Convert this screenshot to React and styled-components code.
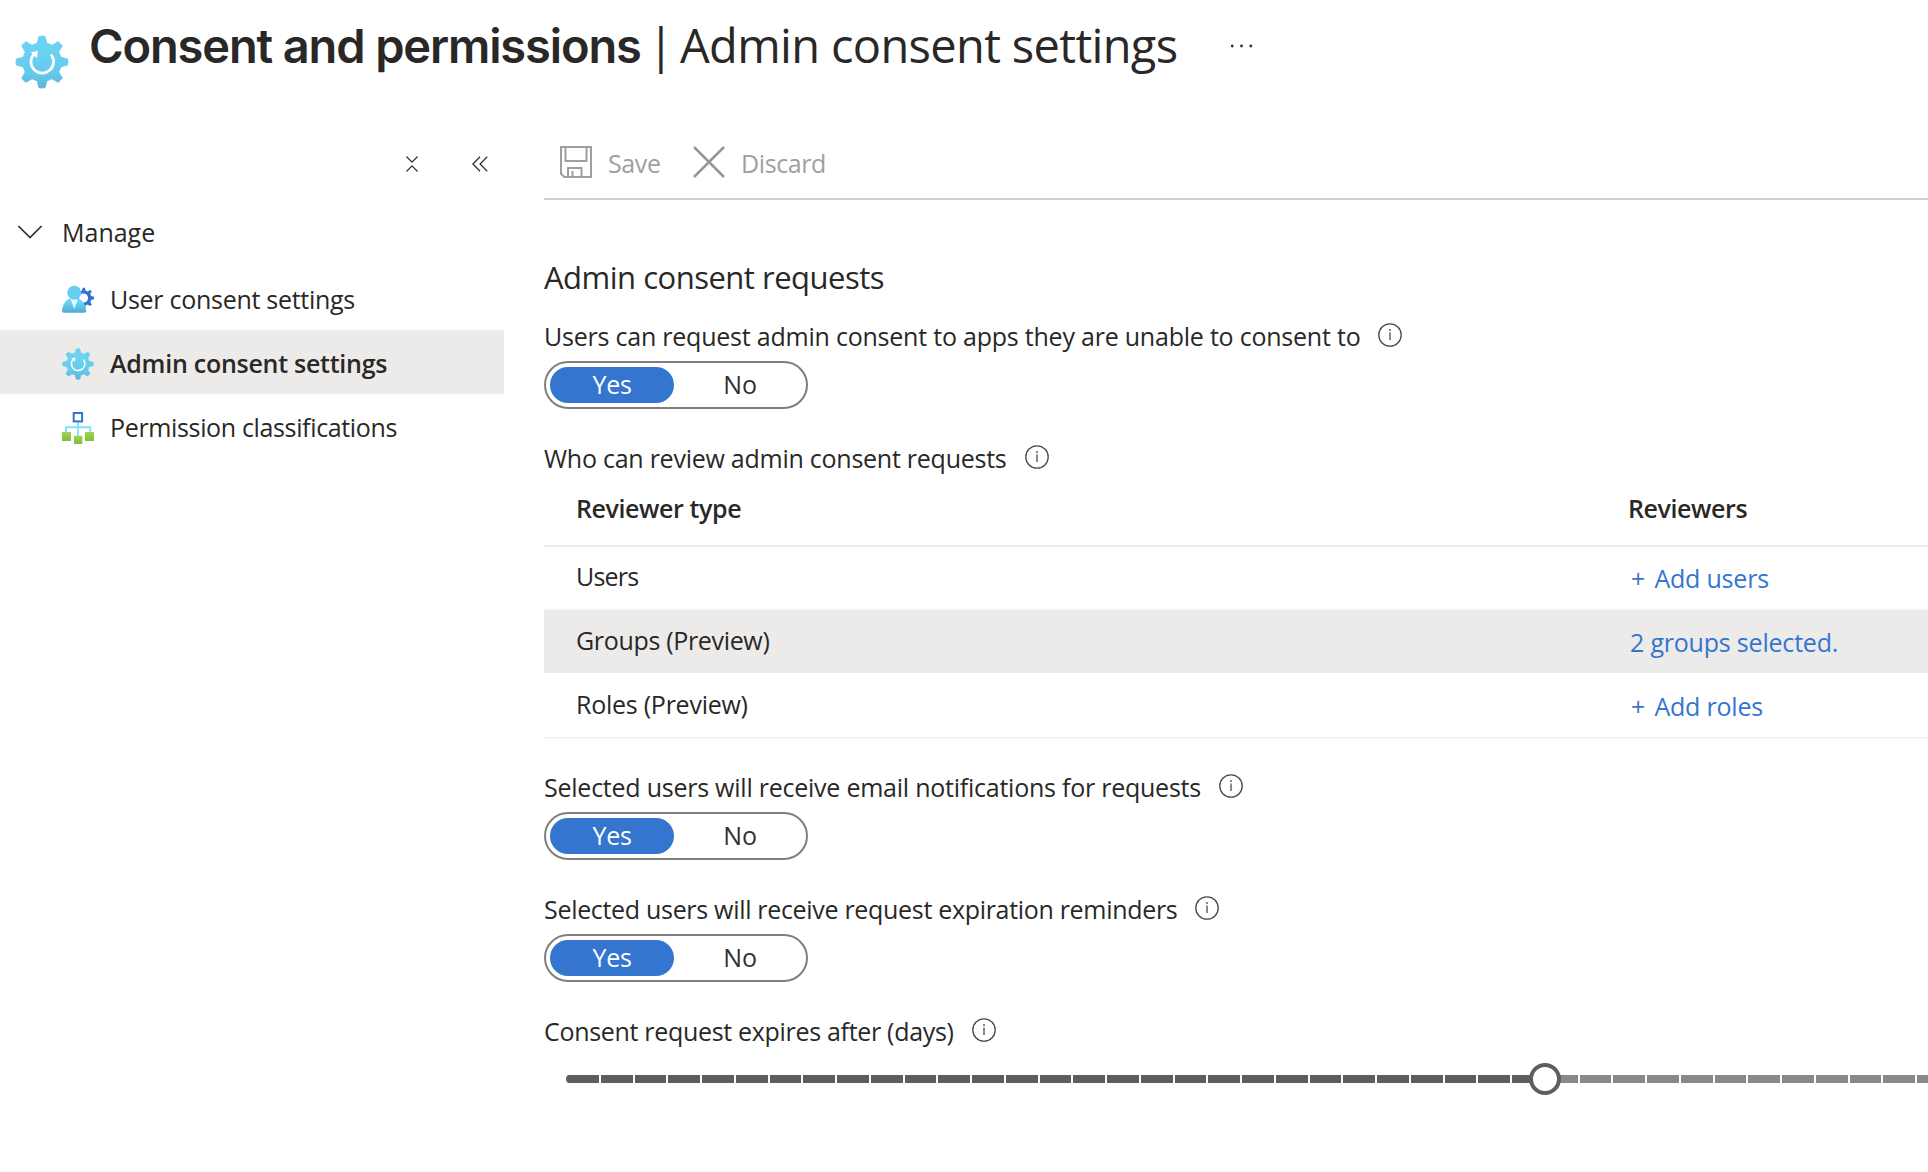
import React, { useState } from 'react';
import styled, { createGlobalStyle } from 'styled-components';

const GlobalStyle = createGlobalStyle`
  * {
    box-sizing: border-box;
  }
  body {
    margin: 0;
    background: #ffffff;
    color: #292827;
    font-family: "Open Sans", "Noto Sans", sans-serif;
    font-size: 25px;
    overflow: hidden;
  }
`;

const Page = styled.div`
  width: 100%;
  height: 1172px;
  overflow: hidden;
`;

const Header = styled.header`
  display: flex;
  align-items: flex-start;
  height: 130px;
  padding-left: 15px;
`;

const HeaderIcon = styled.div`
  width: 54px;
  height: 54px;
  margin-top: 35px;

  & svg {
    display: block;
  }
`;

const Title = styled.h1`
  display: flex;
  align-items: baseline;
  margin: 0 0 0 20px;
  height: 90px;
  line-height: 90px;
  font-size: 47px;
  font-weight: 400;
  white-space: nowrap;
`;

const TitleName = styled.span`
  width: 559px;
  font-family: Inter, sans-serif;
  font-weight: 600;
  letter-spacing: -1.13px;
`;

const TitleBar = styled.span`
  width: 32px;
  font-weight: 500;
`;

const TitleSection = styled.span`
  width: 550px;
  letter-spacing: -0.66px;
`;

const MoreIcon = styled.svg`
  margin-top: 42px;
`;

const Body = styled.div`
  display: flex;
`;

const Sidebar = styled.nav`
  flex: none;
  width: 504px;
  margin-right: 40px;
`;

const SidebarTools = styled.div`
  display: flex;
  align-items: center;
  justify-content: flex-end;
  gap: 54px;
  height: 68px;
  padding-right: 16px;
`;

const GroupHeader = styled.div`
  display: flex;
  align-items: center;
  height: 68px;
  padding-left: 17px;

  & svg {
    margin-right: 19px;
  }
`;

const NavItem = styled.a`
  display: flex;
  align-items: center;
  height: 64px;
  padding: 2px 0 0 62px;
  background: ${({ $active }) => ($active ? '#edebe9' : 'transparent')};
  font-weight: ${({ $active }) => ($active ? 600 : 400)};
  letter-spacing: ${({ $track }) => $track}px;
  white-space: nowrap;
  cursor: pointer;

  & svg {
    flex: none;
    margin: 2px 16px 0 0;
  }
`;

const Main = styled.main`
  flex: none;
  width: 1384px;
`;

const Toolbar = styled.div`
  display: flex;
  align-items: flex-start;
  height: 70px;
  padding: 16px 0 0 16px;
  border-bottom: 2px solid #d2d0ce;
`;

const ToolbarButton = styled.button`
  display: flex;
  align-items: flex-start;
  width: ${({ $width }) => $width}px;
  height: 36px;
  padding: 0;
  border: none;
  background: none;
  color: #a19f9d;
  font-family: inherit;
  font-size: 25px;
  line-height: 34px;
  letter-spacing: -0.4px;

  & svg {
    flex: none;
    margin-right: 16px;
  }
`;

const SectionTitle = styled.h2`
  margin: 47px 0 0;
  height: 64px;
  line-height: 60px;
  font-size: 31px;
  font-weight: 400;
  letter-spacing: -0.5px;
`;

const Field = styled.div`
  margin-bottom: ${({ $gap }) => $gap ?? 24}px;
`;

const Label = styled.div`
  display: flex;
  align-items: center;
  height: 50px;
  white-space: nowrap;
  letter-spacing: ${({ $track }) => $track}px;

  & svg {
    margin: 0 0 2px 18px;
  }
`;

const ToggleBox = styled.div`
  display: flex;
  width: 264px;
  height: 48px;
  padding: 4px;
  border: 2px solid #7f7f7f;
  border-radius: 24px;
`;

const ToggleOption = styled.button`
  flex: none;
  width: 124px;
  height: 36px;
  padding: 0 0 1px;
  border: none;
  border-radius: 18px;
  background: ${({ $selected }) => ($selected ? '#3375cf' : 'transparent')};
  color: ${({ $selected }) => ($selected ? '#ffffff' : '#323130')};
  font-family: inherit;
  font-size: 25px;
  line-height: 35px;
  letter-spacing: -0.3px;

  & + & {
    margin-left: 4px;
  }
`;

const Table = styled.div`
  margin-bottom: 23px;
`;

const TableRow = styled.div`
  display: grid;
  grid-template-columns: 1052px 1fr;
  height: 64px;
  padding-left: 32px;
  line-height: 58px;
  background: ${({ $selected }) => ($selected ? '#edebe9' : '#ffffff')};
  border-bottom: 2px solid ${({ $selected }) => ($selected ? '#ffffff' : '#f3f2f1')};
  letter-spacing: ${({ $track }) => $track}px;
`;

const TableHead = styled(TableRow)`
  line-height: 50px;
  font-weight: 600;
  border-bottom-color: #edebe9;
`;

const RowLink = styled.a`
  padding: 2px 0 0 2px;
  color: #3375cf;
  letter-spacing: -0.2px;
`;

const Plus = styled.span`
  margin: 0 3px 0 1px;
`;

const Slider = styled.div`
  position: relative;
  width: 1992px;
  margin: 19px 0 0 22px;
`;

const Track = styled.div`
  display: flex;
  height: 8px;
  padding-left: 1px;
  border-radius: 4px;
  background: #605e5c;
  overflow: hidden;
`;

const Segment = styled.span`
  flex: 1;
  background: ${({ $filled }) => ($filled ? '#605e5c' : '#8a8886')};
  border-right: 2px solid #ffffff;
`;

const Thumb = styled.span`
  position: absolute;
  top: -12px;
  width: 32px;
  height: 32px;
  margin-left: -16px;
  border: 4px solid #605e5c;
  border-radius: 50%;
  background: #ffffff;
`;

// Outline of a cog with flat, slightly tapered teeth
const cogPath = (cx, cy, outer, inner, teeth = 8) => {
  const step = (Math.PI * 2) / teeth;
  const points = [];
  for (let i = 0; i < teeth; i++) {
    const a = i * step - Math.PI / 2;
    [[inner, -0.25], [outer, -0.11], [outer, 0.11], [inner, 0.25]].forEach(([r, t]) => {
      points.push(`${(cx + r * Math.cos(a + t)).toFixed(2)} ${(cy + r * Math.sin(a + t)).toFixed(2)}`);
    });
  }
  return `M${points.join('L')}Z`;
};

function ConsentIcon({ size, id }) {
  return (
    <svg width={size} height={size} viewBox="0 0 54 54">
      <defs>
        <linearGradient id={id} x1="0" y1="0" x2="0" y2="1">
          <stop offset="0.3" stopColor="#6bd2f2" />
          <stop offset="0.75" stopColor="#64c8ea" />
          <stop offset="1" stopColor="#59b4d9" />
        </linearGradient>
      </defs>
      <path d={cogPath(27, 27, 26, 19.4)} fill={`url(#${id})`} stroke={`url(#${id})`} strokeWidth="1" strokeLinejoin="round" />
      <path d="M18.2 20A11.3 11.3 0 1 0 36.6 20.4" fill="none" stroke="#ffffff" strokeWidth="2.7" strokeLinecap="round" />
      <path d="M15.7 17.3L23 16L21.8 23.2Z" fill="#ffffff" />
    </svg>
  );
}

function UserIcon() {
  return (
    <svg width="32" height="32" viewBox="0 0 32 32">
      <defs>
        <linearGradient id="user" x1="0" y1="0" x2="0" y2="1">
          <stop offset="0.3" stopColor="#6bd2f2" />
          <stop offset="1" stopColor="#4fa9d6" />
        </linearGradient>
      </defs>
      <path d={cogPath(21.8, 14, 10.3, 7.6)} fill="#3172d4" />
      <circle cx="21.5" cy="14" r="4.6" fill="#ffffff" />
      <path d="M2 28.7C0.8 28.7 0 28 0 26.8C0.8 20 4 14.5 10 14.5H14C20 14.5 23.4 20 24.2 26.8C24.2 28 23.4 28.7 22.2 28.7Z" fill="url(#user)" />
      <path d="M8.6 15L12.3 25L16 15Z" fill="#e6f7fd" />
      <circle cx="12.3" cy="8.8" r="7" fill="#68cef0" />
    </svg>
  );
}

function ClassificationIcon() {
  return (
    <svg width="32" height="32" viewBox="0 0 32 32">
      <defs>
        <linearGradient id="leaf" x1="0" y1="0" x2="0" y2="1">
          <stop offset="0" stopColor="#9bd64e" />
          <stop offset="1" stopColor="#84bb41" />
        </linearGradient>
      </defs>
      <path d="M4 21V15.2H28.2V21M16 10V25" fill="none" stroke="#7fe3fc" strokeWidth="1.9" />
      <rect x="11.7" y="1" width="8.4" height="8.4" fill="#ffffff" stroke="#3172d4" strokeWidth="2" />
      <rect x="0" y="20" width="9" height="9" fill="url(#leaf)" />
      <rect x="12" y="23.7" width="8.3" height="8.3" fill="url(#leaf)" />
      <rect x="23" y="20" width="9" height="9" fill="url(#leaf)" />
    </svg>
  );
}

function InfoIcon() {
  return (
    <svg width="24" height="24" viewBox="0 0 24 24">
      <circle cx="12" cy="12" r="11.2" fill="none" stroke="#4c4a48" strokeWidth="1.3" />
      <path d="M12 9.5V17" stroke="#4c4a48" strokeWidth="1.3" />
      <circle cx="12" cy="7" r="0.9" fill="#4c4a48" />
    </svg>
  );
}

function SaveIcon() {
  return (
    <svg width="32" height="32" viewBox="0 0 32 32" fill="none" stroke="#a19f9d" strokeWidth="2">
      <path d="M1 1H31V31H4.4L1 27.8Z" />
      <path d="M5.5 1V15H26.5V1M8 31V22H21.5V31M12.5 25V31" />
    </svg>
  );
}

function DiscardIcon() {
  return (
    <svg width="32" height="32" viewBox="0 0 32 32">
      <path d="M1 1L31 31M31 1L1 31" stroke="#989694" strokeWidth="2.5" />
    </svg>
  );
}

function Toggle() {
  const [on, setOn] = useState(true);

  return (
    <ToggleBox>
      <ToggleOption $selected={on} onClick={() => setOn(true)}>Yes</ToggleOption>
      <ToggleOption $selected={!on} onClick={() => setOn(false)}>No</ToggleOption>
    </ToggleBox>
  );
}

const reviewers = [
  { type: 'Users', link: 'Add users', canAdd: true, track: -0.8 },
  { type: 'Groups (Preview)', link: '2 groups selected.', track: -0.33, selected: true },
  { type: 'Roles (Preview)', link: 'Add roles', canAdd: true, track: -0.25 },
];

const STEPS = 59;
const VALUE = 29;

function App() {
  return (
    <Page>
      <GlobalStyle />
      <Header>
        <HeaderIcon><ConsentIcon size={54} id="cogLarge" /></HeaderIcon>
        <Title>
          <TitleName>Consent and permissions</TitleName>
          <TitleBar>|</TitleBar>
          <TitleSection>Admin consent settings</TitleSection>
        </Title>
        <MoreIcon width="24" height="8" viewBox="0 0 24 8" fill="#323130">
          <circle cx="2.2" cy="4" r="1.4" />
          <circle cx="11.5" cy="4" r="1.4" />
          <circle cx="20.8" cy="4" r="1.4" />
        </MoreIcon>
      </Header>

      <Body>
        <Sidebar>
          <SidebarTools>
            <svg width="12" height="16" viewBox="0 0 12 16" fill="none" stroke="#323130" strokeWidth="1.3">
              <path d="M0.4 0.5L6 6.1L11.6 0.5M0.4 15.5L6 9.9L11.6 15.5" />
            </svg>
            <svg width="16" height="16" viewBox="0 0 16 16" fill="none" stroke="#323130" strokeWidth="1.3">
              <path d="M8 0.8L0.9 8L8 15.2M15.2 0.8L8.1 8L15.2 15.2" />
            </svg>
          </SidebarTools>
          <GroupHeader>
            <svg width="26" height="14" viewBox="0 0 26 14" fill="none" stroke="#323130" strokeWidth="1.7">
              <path d="M1.4 1L13 12.6L24.6 1" />
            </svg>
            Manage
          </GroupHeader>
          <NavItem $track={-0.28}><UserIcon />User consent settings</NavItem>
          <NavItem $active $track={-0.26}><ConsentIcon size={32} id="cogSmall" />Admin consent settings</NavItem>
          <NavItem $track={-0.35}><ClassificationIcon />Permission classifications</NavItem>
        </Sidebar>

        <Main>
          <Toolbar>
            <ToolbarButton $width={133}><SaveIcon />Save</ToolbarButton>
            <ToolbarButton $width={150}><DiscardIcon />Discard</ToolbarButton>
          </Toolbar>

          <SectionTitle>Admin consent requests</SectionTitle>

          <Field>
            <Label $track={-0.22}>Users can request admin consent to apps they are unable to consent to<InfoIcon /></Label>
            <Toggle />
          </Field>

          <Label $track={-0.25}>Who can review admin consent requests<InfoIcon /></Label>
          <Table>
            <TableHead $track={-0.4}>
              <span>Reviewer type</span>
              <span>Reviewers</span>
            </TableHead>
            {reviewers.map((row) => (
              <TableRow key={row.type} $selected={row.selected} $track={row.track}>
                <span>{row.type}</span>
                <RowLink>
                  {row.canAdd && <Plus>+ </Plus>}
                  {row.link}
                </RowLink>
              </TableRow>
            ))}
          </Table>

          <Field>
            <Label $track={-0.24}>Selected users will receive email notifications for requests<InfoIcon /></Label>
            <Toggle />
          </Field>
          <Field>
            <Label $track={-0.31}>Selected users will receive request expiration reminders<InfoIcon /></Label>
            <Toggle />
          </Field>
          <Field $gap={0}>
            <Label $track={-0.31}>Consent request expires after (days)<InfoIcon /></Label>
            <Slider>
              <Track>
                {Array.from({ length: STEPS }, (_, i) => (
                  <Segment key={i} $filled={i < VALUE} />
                ))}
              </Track>
              <Thumb style={{ left: `${(VALUE / STEPS) * 100}%` }} />
            </Slider>
          </Field>
        </Main>
      </Body>
    </Page>
  );
}

export default App;
